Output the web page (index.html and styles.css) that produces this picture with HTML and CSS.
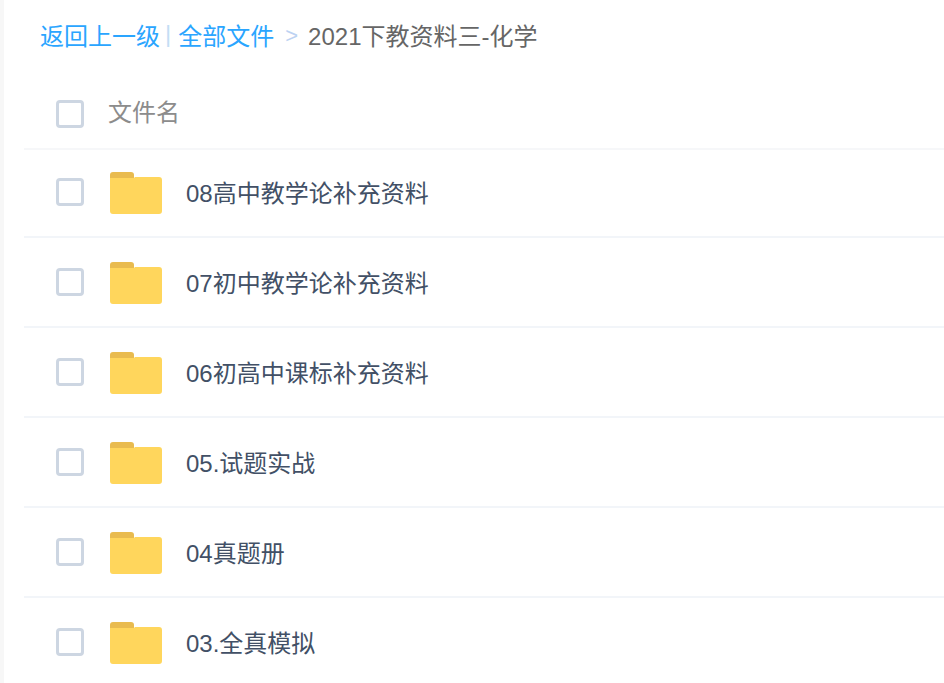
FILE: index.html
```html
<!DOCTYPE html>
<html lang="zh">
<head>
    <meta charset="UTF-8">
    <meta name="viewport" content="width=device-width, initial-scale=1.0">
    <title>全部文件</title>
    <link rel="stylesheet" href="styles.css">
</head>
<body>
    <div class="page">
        <!-- 面包屑 -->
        <div class="crumbs">
            <a class="link">返回上一级</a>
            <span class="bar">|</span>
            <a class="link">全部文件</a>
            <span class="arrow">&gt;</span>
            <span class="current">2021下教资料三-化学</span>
        </div>

        <div class="head-row">
            <span class="check"></span>
            <span class="head-name">文件名</span>
        </div>

        <div class="row">
            <span class="check"></span>
            <svg class="folder" viewBox="0 0 52 42"><path fill="#e9bb4f" d="M0 3a3 3 0 0 1 3-3h18a3 3 0 0 1 3 3v3H0z"/><path fill="#ffd65c" d="M0 6h24l1-1h24a3 3 0 0 1 3 3v31a3 3 0 0 1-3 3H3a3 3 0 0 1-3-3z"/></svg>
            <span class="name">08高中教学论补充资料</span>
        </div>
        <div class="row">
            <span class="check"></span>
            <svg class="folder" viewBox="0 0 52 42"><path fill="#e9bb4f" d="M0 3a3 3 0 0 1 3-3h18a3 3 0 0 1 3 3v3H0z"/><path fill="#ffd65c" d="M0 6h24l1-1h24a3 3 0 0 1 3 3v31a3 3 0 0 1-3 3H3a3 3 0 0 1-3-3z"/></svg>
            <span class="name">07初中教学论补充资料</span>
        </div>
        <div class="row">
            <span class="check"></span>
            <svg class="folder" viewBox="0 0 52 42"><path fill="#e9bb4f" d="M0 3a3 3 0 0 1 3-3h18a3 3 0 0 1 3 3v3H0z"/><path fill="#ffd65c" d="M0 6h24l1-1h24a3 3 0 0 1 3 3v31a3 3 0 0 1-3 3H3a3 3 0 0 1-3-3z"/></svg>
            <span class="name">06初高中课标补充资料</span>
        </div>
        <div class="row">
            <span class="check"></span>
            <svg class="folder" viewBox="0 0 52 42"><path fill="#e9bb4f" d="M0 3a3 3 0 0 1 3-3h18a3 3 0 0 1 3 3v3H0z"/><path fill="#ffd65c" d="M0 6h24l1-1h24a3 3 0 0 1 3 3v31a3 3 0 0 1-3 3H3a3 3 0 0 1-3-3z"/></svg>
            <span class="name">05.试题实战</span>
        </div>
        <div class="row">
            <span class="check"></span>
            <svg class="folder" viewBox="0 0 52 42"><path fill="#e9bb4f" d="M0 3a3 3 0 0 1 3-3h18a3 3 0 0 1 3 3v3H0z"/><path fill="#ffd65c" d="M0 6h24l1-1h24a3 3 0 0 1 3 3v31a3 3 0 0 1-3 3H3a3 3 0 0 1-3-3z"/></svg>
            <span class="name">04真题册</span>
        </div>
        <div class="row">
            <span class="check"></span>
            <svg class="folder" viewBox="0 0 52 42"><path fill="#e9bb4f" d="M0 3a3 3 0 0 1 3-3h18a3 3 0 0 1 3 3v3H0z"/><path fill="#ffd65c" d="M0 6h24l1-1h24a3 3 0 0 1 3 3v31a3 3 0 0 1-3 3H3a3 3 0 0 1-3-3z"/></svg>
            <span class="name">03.全真模拟</span>
        </div>
    </div>
</body>
</html>
```

FILE: styles.css
```css
body {
    font-family: "Liberation Sans", "Noto Sans CJK SC", sans-serif;
    margin: 0;
    background-color: #fff;
    font-size: 24px;
    overflow: hidden;
}

.page {
    height: 683px;
    border-left: 4px solid #f7f7f7;
    padding-left: 20px;
}

.crumbs {
    display: flex;
    align-items: center;
    height: 72px;
    box-sizing: border-box;
    padding-left: 16px;
    padding-bottom: 4px;
    color: #666;
}

.link {
    color: #2aa5ff;
}

.bar {
    color: #c4def5;
    margin: 0 7px 0 5px;
}

.arrow {
    color: #bcd2f2;
    margin: 4px 10px 0 11px;
    font-size: 22px;
}

.head-row {
    display: flex;
    align-items: center;
    height: 78px;
    box-sizing: border-box;
    padding-left: 32px;
    margin-bottom: -2px;
    border-bottom: 2px solid #f6f7f9;
}

.head-row .check {
    margin: 8px 0 0;
}

.head-name {
    margin-left: 24px;
    color: #8c8c8c;
}

.row {
    display: flex;
    align-items: center;
    height: 90px;
    box-sizing: border-box;
    padding-left: 32px;
    padding-top: 2px;
    border-bottom: 2px solid #f2f5f9;
}

.check {
    width: 28px;
    height: 28px;
    box-sizing: border-box;
    border: 3px solid #cdd6e2;
    border-radius: 4px;
    background-color: #fff;
    margin-bottom: 2px;
}

.folder {
    width: 52px;
    height: 42px;
    margin-left: 26px;
}

.name {
    margin-left: 24px;
    margin-bottom: 4px;
    color: #425066;
}
```
